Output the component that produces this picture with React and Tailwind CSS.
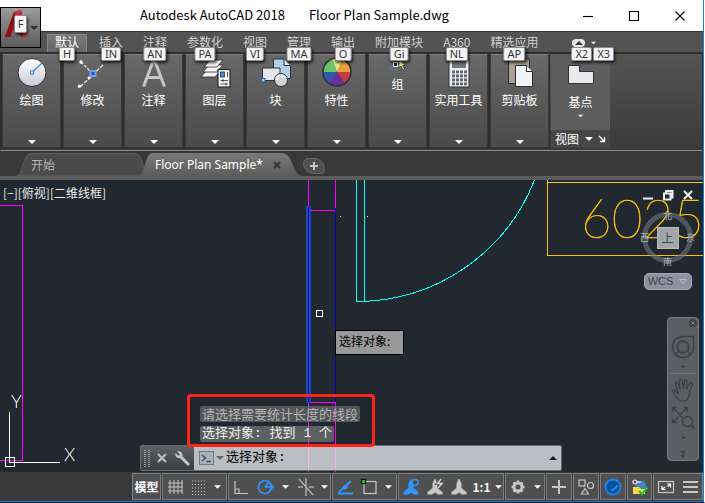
import { useState } from 'react';
import clsx from 'clsx';

const TABS = [
  { label: '默认', tip: 'H' },
  { label: '插入', tip: 'IN' },
  { label: '注释', tip: 'AN' },
  { label: '参数化', tip: 'PA' },
  { label: '视图', tip: 'VI' },
  { label: '管理', tip: 'MA' },
  { label: '输出', tip: 'O' },
  { label: '附加模块', tip: 'Gi' },
  { label: 'A360', tip: 'NL' },
  { label: '精选应用', tip: 'AP' },
];

function KeyTip({ children, className = '' }) {
  return (
    <span className={clsx('absolute z-20 flex items-center justify-center rounded-xs border border-[#8c8c8c] bg-[#f3f3f3] px-[3px] font-[Noto_Sans,sans-serif] text-[11px] leading-3 text-[#333] shadow-[1px_2px_3px_rgba(0,0,0,0.7)]', className)}>
      {children}
    </span>
  );
}

function Caret({ className = 'text-white', up = false }) {
  return (
    <svg viewBox="0 0 8 4" className={clsx('h-1 w-2 shrink-0', className)} aria-hidden="true">
      <path d={up ? 'M0 4L4 0L8 4Z' : 'M0 0H8L4 4Z'} fill="currentColor" />
    </svg>
  );
}

/* ---------- ribbon icons ---------- */

function DrawIcon() {
  return (
    <svg viewBox="0 0 32 32" className="size-8">
      <defs><linearGradient id="disc" x2="0" y2="1"><stop stopColor="#fff" /><stop offset="1" stopColor="#c6cad6" /></linearGradient></defs>
      <circle cx="16" cy="16.500" r="14" fill="url(#disc)" stroke="#303030" />
      <path d="M17 15.500L26 7" stroke="#3b86e8" strokeWidth="1.200" />
      <rect x="14.500" y="15" width="3" height="3" fill="#fff" stroke="#2f78dc" />
    </svg>
  );
}

function ModifyIcon() {
  return (
    <svg viewBox="0 0 32 32" className="size-8" fill="none">
      <path d="M4 6L16 18" stroke="#ddd" strokeWidth="1.400" strokeDasharray="3 1.500" />
      <path d="M26 9L2 32" stroke="#ddd" strokeWidth="1.400" strokeDasharray="4 1.500" />
      <circle cx="4" cy="6" r="1.700" fill="#fff" /><circle cx="2.500" cy="30.300" r="1.700" fill="#fff" /><circle cx="12" cy="22" r="1.400" fill="#fff" />
      <rect x="13.500" y="15" width="5" height="5" fill="#2d5596" stroke="#6ea4f2" strokeWidth="2" />
    </svg>
  );
}

function AnnotateIcon() {
  return (
    <svg viewBox="0 0 32 32" className="size-8">
      <path d="M5.500 30.500L16 3L26.500 30.500M9 21.500H23" fill="none" stroke="#c6c6c6" strokeWidth="3" />
    </svg>
  );
}

function LayersIcon() {
  return (
    <svg viewBox="0 0 32 32" className="size-8" stroke="#2a2a2a" strokeWidth="0.800">
      <g fill="#f4f4f4">
        <path d="M2 21L8 14H22L16 21Z" />
        <path d="M4 16L10 9H24L18 16Z" />
        <path d="M5 11L11 4H24L18 11Z" />
      </g>
      <rect x="19" y="13.500" width="12" height="17.500" fill="#f3f4f7" strokeWidth="1.200" />
      <rect x="21.500" y="16" width="4" height="5" fill="#3f8be0" stroke="#333" />
      <path d="M28.500 16V21M21.500 24.500H29M21.500 28H29M24 23V26M27 26.500V29.500" stroke="#333" />
    </svg>
  );
}

function BlockIcon() {
  return (
    <svg viewBox="0 0 32 32" className="size-8" stroke="#303030">
      <path d="M13.500 3H24L30.500 9.500V22.500H13.500Z" fill="#b4d0f0" />
      <path d="M24 3V9.500H30.500" fill="#edf4fc" />
      <path d="M2.500 12H20V24.500H2.500Z" fill="#e3e5ea" />
      <circle cx="21" cy="24" r="6.500" fill="#f0f1f4" fillOpacity="0.800" />
      <rect x="1.500" y="22.500" width="3.500" height="3.500" fill="#a8cbff" stroke="#245cb8" />
    </svg>
  );
}

function PropertiesIcon() {
  const slices = [
    ['M16 16L11 3A14 14 0 0 1 22 3.300Z', '#f0e88c'],
    ['M16 16L22 3.300A14 14 0 0 1 30 16Z', '#e9a23b'],
    ['M16 16H30A14 14 0 0 1 24 27.500Z', '#c73a3f'],
    ['M16 16L24 27.500A14 14 0 0 1 8 27.500Z', '#6a2f9c'],
    ['M16 16L8 27.500A14 14 0 0 1 2 16Z', '#3259ad'],
    ['M16 16H2A14 14 0 0 1 11 3Z', '#6cc26a'],
  ];
  return (
    <svg viewBox="0 0 32 32" className="size-8">
      {slices.map(([d, fill]) => <path key={fill} d={d} fill={fill} />)}
      <circle cx="16" cy="16" r="14" fill="none" stroke="#333" strokeWidth="1.500" />
    </svg>
  );
}

function GroupIcon() {
  return (
    <svg viewBox="0 0 16 16" className="size-4">
      <rect x="1" y="2.500" width="9" height="11" fill="none" stroke="#3c84e6" strokeDasharray="1 1" />
      <rect x="3.500" y="6.500" width="4" height="4" fill="#222" stroke="#eee" />
      <path d="M9 3V12L11 10L13 14L14.500 13L12.500 9.500H15Z" fill="#f6f0a0" stroke="#333" strokeWidth="0.700" />
    </svg>
  );
}

function CalculatorIcon() {
  return (
    <svg viewBox="0 0 32 32" className="size-8">
      <rect x="6" y="3" width="20" height="28" fill="#eceef1" stroke="#303030" />
      <rect x="9" y="5" width="14" height="7" fill="#777" />
      {[15, 19, 23, 27].map((y) => [9, 13, 17, 21].map((x) => (
        <rect key={`${x}-${y}`} x={x} y={y - 0.5} width="3" height="2.800" fill="#5f6673" />
      )))}
    </svg>
  );
}

function ClipboardIcon() {
  return (
    <svg viewBox="0 0 32 32" className="size-8" stroke="#2c2c2c">
      <path d="M4.500 3H25.500V27.500H4.500Z" fill="#aaa093" />
      <path d="M11.500 9.500H22.500L28.500 15.500V30.500H11.500Z" fill="#f1f2f5" />
      <path d="M22.500 9.500V15.500H28.500" fill="#fff" />
    </svg>
  );
}

function BaseIcon() {
  return (
    <svg viewBox="0 0 32 32" className="size-8">
      <path d="M3.500 9.500H14.500V15.500H28.500V27.500H3.500Z" fill="#e9eaee" stroke="#303030" />
    </svg>
  );
}

const PANELS = [
  { label: '绘图', Icon: DrawIcon },
  { label: '修改', Icon: ModifyIcon },
  { label: '注释', Icon: AnnotateIcon },
  { label: '图层', Icon: LayersIcon },
  { label: '块', Icon: BlockIcon },
  { label: '特性', Icon: PropertiesIcon },
  { label: '组', Icon: GroupIcon },
  { label: '实用工具', Icon: CalculatorIcon },
  { label: '剪贴板', Icon: ClipboardIcon },
];

function TitleBar() {
  return (
    <header className="flex h-[31px] items-center bg-white pl-[140px] text-black">
      <h1 className="flex flex-1 gap-6 whitespace-nowrap pb-0.5 text-[13px] leading-4">
        <span>Autodesk AutoCAD 2018</span>
        <span>Floor Plan Sample.dwg</span>
      </h1>
      {[
        ['最小化', 'M0 5.500H10'],
        ['最大化', 'M0.500 0.500H9.500V9.500H0.500Z'],
        ['关闭', 'M0.500 0.500L9.500 9.500M9.500 0.500L0.500 9.500'],
      ].map(([name, d]) => (
        <button key={name} aria-label={name} className="flex h-7 w-[46px] items-center justify-center">
          <svg viewBox="0 0 10 10" className="size-[10px] overflow-visible"><path d={d} fill="none" stroke="#000" strokeWidth="1.100" /></svg>
        </button>
      ))}
    </header>
  );
}

function AppMenu() {
  return (
    <button aria-label="应用程序菜单" className="absolute top-[7px] left-0 z-30 flex h-[41px] w-[41px] items-center border border-black bg-linear-to-b from-[#9c9c9c] to-[#5c5c5c]">
      <svg viewBox="0 0 28 28" className="absolute top-0.5 left-1 size-7">
        <path d="M0 27L9 2L16 0L22 26L16 27L14 20L8 20L6 27Z" fill="#a51b20" />
        <path d="M9 2L16 0L22 26L18 27L11 6L5 27H0Z" fill="#cf2e33" />
        <path d="M0 27L9 2L11 6L5 27Z" fill="#8b1015" />
      </svg>
      <KeyTip className="top-[7px] left-[13px] h-[18px] w-[13px] rounded-sm">F</KeyTip>
      <Caret className="ml-auto mr-0.5 text-[#26303f]" />
    </button>
  );
}

function RibbonTabs() {
  const [active, setActive] = useState('默认');
  return (
    <nav className="flex h-[21px] items-end border-t border-[#303030] bg-[#535353] pl-[47px]">
      {TABS.map(({ label, tip }) => (
        <button
          key={label}
          onClick={() => setActive(label)}
          className={clsx(
            'relative mr-1 flex h-[18px] shrink-0 items-center justify-center whitespace-nowrap border border-b-0 px-[7px] text-[12px] leading-4',
            active === label ? 'border-[#868686] bg-linear-to-b from-[#777] to-[#666] text-white' : 'border-transparent text-[#cfcfcf]',
          )}
        >
          <span className="-mt-1">{label}</span>
          <KeyTip className="top-[12px] left-1/2 h-[14px] -translate-x-1/2">{tip}</KeyTip>
        </button>
      ))}
      <button aria-label="最小化功能区" className="relative ml-[22px] flex h-[18px] w-[15px] items-center">
        <span className="flex h-2 w-[13px] items-center justify-center rounded-sm bg-[#e2e4ea]">
          <Caret up className="w-1.5 text-[#333]" />
        </span>
        <KeyTip className="top-[13px] -left-px h-[14px]">X2</KeyTip>
      </button>
      <button aria-label="功能区选项" className="relative ml-1 flex h-[18px] w-3 items-center">
        <Caret className="w-[5px] text-white" />
        <KeyTip className="top-[13px] left-0.5 h-[14px]">X3</KeyTip>
      </button>
    </nav>
  );
}

function Ribbon() {
  return (
    <section className="flex h-[99px] gap-0.5 border border-t-2 border-[#2f2f2f] border-b-[#8b8b8b] bg-linear-to-b from-[#545454] to-[#3a3a3a] pb-0.5 pl-px text-[12px] text-white">
      {PANELS.map(({ label, Icon }) => (
        <button key={label} className="flex w-[59px] shrink-0 flex-col items-center border border-[#3a3a3a] border-t-[#7d7d7d] bg-linear-to-b from-[#696969] to-[#4a4a4a] pt-px pb-[3px] outline outline-[#2f2f2f]">
          <Icon />
          <span className="mt-1 whitespace-nowrap leading-4">{label}</span>
          <Caret className="mt-auto" />
        </button>
      ))}
      <div className="flex w-[59px] shrink-0 flex-col bg-[#5e5e5e]">
        <button className="flex flex-1 flex-col items-center pt-0.5">
          <BaseIcon />
          <span className="mt-1.5 leading-4">基点</span>
          <Caret className="mt-1 w-[5px]" />
        </button>
        <button className="flex h-[18px] items-center gap-1.5 bg-[#464646] pl-1">
          视图
          <Caret />
          <svg viewBox="0 0 6 6" className="size-1.5 overflow-visible"><path d="M0 0L5 5M5.500 1V5.500H1" fill="none" stroke="#fff" strokeWidth="1.300" /></svg>
        </button>
      </div>
    </section>
  );
}

function FileTabs() {
  return (
    <nav className="flex h-[29px] items-end border-b-4 border-[#5c5c5c] bg-[#383838] pl-[17px] text-[12px]">
      <button className="relative flex h-[23px] w-[132px] items-center pl-[14px] text-[#b5b5b5]">
        <svg viewBox="0 0 132 23" preserveAspectRatio="none" className="absolute inset-0 size-full" aria-hidden="true">
          <path d="M0 23C7 21 5 1 14 0.500H118C127 1 125 21 132 23Z" fill="#4b4b4b" stroke="#5e5e5e" />
        </svg>
        <span className="relative">开始</span>
      </button>
      <button className="relative -ml-[10px] flex h-[23px] w-[164px] items-center gap-2.5 pl-4 font-[Noto_Sans,sans-serif] text-white">
        <svg viewBox="0 0 164 23" preserveAspectRatio="none" className="absolute inset-0 size-full" aria-hidden="true">
          <defs><linearGradient id="tab" x2="0" y2="1"><stop stopColor="#7a7a7a" /><stop offset="1" stopColor="#5c5c5c" /></linearGradient></defs>
          <path d="M0 23C7 21 5 0 14 0H142C156 0 151 21 164 23Z" fill="url(#tab)" />
        </svg>
        <span className="relative whitespace-nowrap">Floor Plan Sample*</span>
        <svg viewBox="0 0 8 8" className="relative size-2"><path d="M1 1L7 7M7 1L1 7" stroke="#343434" strokeWidth="2" /></svg>
      </button>
      <button aria-label="新图形" className="mb-0.5 flex h-4 w-[22px] items-center justify-center rounded-tl-md rounded-tr-xl rounded-br-sm rounded-bl-xl border border-[#666] bg-[#505050]">
        <svg viewBox="0 0 8 8" className="size-2"><path d="M4 0V8M0 4H8" stroke="#c4c4c4" strokeWidth="2" /></svg>
      </button>
    </nav>
  );
}

/* Model space geometry, one unit per pixel. */
function Drawing() {
  return (
    <svg width="703" height="292" className="absolute top-0 left-0" fill="none" shapeRendering="crispEdges">
      <g stroke="#ff00ff">
        <path d="M0 25.500H22.500V280.500H0" />
        <path d="M308.500 0V30.500H335.500V0M308.500 292V222.500H335.500V292" />
      </g>
      <path d="M308.500 28V221" stroke="#1d4ba8" strokeWidth="5" strokeLinecap="round" />
      <path d="M308.500 27V222" stroke="#0000ff" strokeWidth="1" />
      <path d="M335.500 28V222" stroke="#0000b8" />
      <g stroke="#00ffff">
        <path d="M356.500 0V121.500H364.500V0" />
        <path d="M356.500 121.500A191 191 0 0 0 534.500 0" />
      </g>
      <g stroke="#ffbf00">
        <path d="M547.500 0V75.500H703M547.500 2.500H703" />
      </g>
      <text x="581" y="58" fill="#ffbf00" stroke="#ffbf00" strokeWidth="0.600" className="font-[Lato,sans-serif] text-[53px] font-thin">6025</text>
      <path d="M340 36.500H341M367 36.500H368" stroke="#fff" />
      <rect x="316.500" y="130.500" width="6" height="6" stroke="#fff" />
      <path d="M5.500 277.500H14.500V286.500H5.500ZM9.500 232V282.500H60" stroke="#fff" />
      <text x="11" y="228" fill="#fff" className="font-[Lato,sans-serif] text-[18px] font-light">Y</text>
      <text x="64" y="281" fill="#fff" className="font-[Lato,sans-serif] text-[18px] font-light">X</text>
    </svg>
  );
}

function ViewCube() {
  return (
    <div className="absolute top-2.5 right-2 flex w-[55px] flex-col items-center">
      <div className="flex gap-2.5">
        {[
          ['最小化视口', 'M0 8.500H10'],
          ['还原视口', 'M3 3V1H9.500V7.500H7.500M1 3.500H7.500V9.500H1Z'],
          ['关闭视口', 'M1 1L9 9M9 1L1 9'],
        ].map(([name, d]) => (
          <button key={name} aria-label={name} className="size-[10px]">
            <svg viewBox="0 0 10 10" className="block size-[10px] overflow-visible"><path d={d} fill="none" stroke="#eee" strokeWidth="2" /></svg>
          </button>
        ))}
      </div>
      <div className="mt-3 flex size-[51px] items-center justify-center rounded-full border-[5px] border-[#70757d]/60 text-[9px] leading-3 text-[#aeb0b3]">
        <span className="absolute top-[20px]">北</span>
        <span className="absolute bottom-[22px]">南</span>
        <span className="absolute top-[42px] left-0">西</span>
        <span className="absolute top-[42px] right-0">东</span>
        <button className="size-[22px] border border-[#b9bbbd] bg-[#a2a6a9] text-[12px] leading-4 text-[#3e4850]">上</button>
      </div>
      <button className="mt-2.5 flex h-[17px] w-[48px] items-center justify-center gap-1.5 rounded-[5px] border border-[#a6a9b3] bg-[#8f929e] font-[Liberation_Sans,sans-serif] text-[11px] text-[#3f4350]">
        WCS
        <svg viewBox="0 0 8 5" className="h-[5px] w-2"><path d="M0.500 0.500H7.500L4 4.500Z" fill="none" stroke="#b8bac2" /></svg>
      </button>
    </div>
  );
}

function NavBar() {
  return (
    <aside className="absolute right-1 bottom-[11px] flex h-[144px] w-8 flex-col items-center rounded-[4px] border border-[#777b80] bg-[#5b5f64] text-[#3d4146]">
      <button aria-label="关闭导航栏" className="mt-px self-end">
        <svg viewBox="0 0 8 8" className="mr-px size-2"><circle cx="4" cy="4" r="3.800" fill="currentColor" /><path d="M2.500 2.500L5.500 5.500M5.500 2.500L2.500 5.500" stroke="#888" /></svg>
      </button>
      <button aria-label="控制盘" className="mt-2">
        <svg viewBox="0 0 24 24" className="block size-6" fill="none" stroke="currentColor" strokeWidth="1.300">
          <path d="M12 1.500H22.500V12A10.500 10.500 0 1 1 12 1.500Z" /><circle cx="12" cy="12" r="6" /><circle cx="12" cy="12" r="4.500" strokeWidth="0.600" /><path d="M7.500 16.500L4.500 19.500M16.500 16.500L19.500 19.500" />
        </svg>
      </button>
      <Caret className="mt-1.5 w-[5px]" />
      <hr className="mt-1 w-[26px] border-[#70757a]" />
      <button aria-label="平移" className="mt-1">
        <svg viewBox="0 0 24 24" className="block size-6" fill="none" stroke="currentColor" strokeWidth="1.300" strokeLinejoin="round">
          <path d="M8 22C5 19 3 16 1.500 13.500C1 12 3 11.500 4 12.500L7 15.500L4.500 5.500C4.300 3.500 6.500 3.500 7 5L9 11L8.500 2.800C8.500 1 11 1 11.300 2.800L12.300 10.500L13.500 2.500C14 1 16 1.500 16 3L15.500 11L19 5.500C20 4 22 5 21.200 6.800L18.500 13C19 17 17.500 20 16 22C13.500 23.500 10.500 23.500 8 22Z" />
        </svg>
      </button>
      <button aria-label="缩放" className="mt-1">
        <svg viewBox="0 0 24 24" className="block size-6" fill="none" stroke="currentColor" strokeWidth="1.300">
          <path d="M1.500 5.500V1.500H5.500M1.500 1.500L13 13M12.500 1.500H16.500V5.500M16.500 1.500L1.500 16.500M1.500 12.500V16.500H5.500" /><circle cx="16.500" cy="15.500" r="5" /><path d="M20 19L23 22.500" strokeWidth="2.600" />
        </svg>
      </button>
      <Caret className="mt-1.5 w-[5px]" />
      <svg viewBox="0 0 6 8" className="mt-2.5 h-2 w-1.5"><path d="M0 0H6M1 1.500H5L3 4ZM1 5H5L3 8Z" fill="currentColor" stroke="currentColor" strokeWidth="0.600" /></svg>
    </aside>
  );
}

function CommandLine() {
  const [value, setValue] = useState('');
  return (
    <div className="absolute right-[141px] bottom-px left-[140px]">
      <div className="relative z-10 ml-[47px] -mb-0.5 flex h-[53px] w-[188px] flex-col items-start gap-1 rounded-[4px] border-[3px] border-[#fd2517] pt-[9px] pl-2.5 text-[13px] leading-4 whitespace-nowrap">
        <p className="rounded-xs bg-[#777]/60 px-0.5 text-[#b4b4b4]">请选择需要统计长度的线段</p>
        <p className="rounded-xs bg-[#777]/70 px-0.5 font-[Liberation_Mono,Noto_Sans_CJK_SC,monospace] text-[#eee]">选择对象: 找到 1 个</p>
      </div>
      <div className="flex h-[26px] rounded-xs border border-[#6c6d70] bg-[#eeeff1]/75">
        <div className="flex w-[53px] items-center justify-between bg-linear-to-b from-[#5e6163] to-[#3b3e41] pr-1 pl-[3px]">
          <svg viewBox="0 0 6 17" className="h-[17px] w-1.5"><path d="M1 0V17M5 0V17" stroke="#999" strokeWidth="2" strokeDasharray="1 1" /></svg>
          <button aria-label="关闭命令行">
            <svg viewBox="0 0 10 10" className="size-[10px]"><path d="M1 1L9 9M9 1L1 9" stroke="#bcbcbc" strokeWidth="2.200" /></svg>
          </button>
          <button aria-label="自定义">
            <svg viewBox="0 0 16 16" className="size-4">
              <path d="M7 7L14 14" stroke="#c6c6c6" strokeWidth="3" strokeLinecap="round" />
              <path d="M3 1.500L5.500 4V5.500H4L1.500 3C0.500 6 3 9 6.500 8L8.500 6C9 3 6.500 0.500 3 1.500Z" fill="#c6c6c6" />
            </svg>
          </button>
        </div>
        <label htmlFor="command" className="flex items-center gap-0.5 pl-[5px] font-[Liberation_Mono,Noto_Sans_CJK_SC,monospace] text-[13px] whitespace-nowrap text-black">
          <svg viewBox="0 0 15 14" className="h-3.5 w-[15px]">
            <rect x="0.500" y="0.500" width="14" height="13" fill="#a9b1bb" stroke="#6f7985" />
            <path d="M3 4L6.500 7L3 10M7.500 10.500H12" fill="none" stroke="#3d4856" strokeWidth="1.300" />
          </svg>
          <Caret className="w-1.5 text-[#666]" />
          选择对象:
        </label>
        <input id="command" value={value} onChange={(e) => setValue(e.target.value)} className="min-w-0 flex-1 bg-transparent px-1 text-[13px] text-black outline-none" />
        <button aria-label="命令历史" className="px-1"><Caret up className="text-[#1c1c1c]" /></button>
      </div>
    </div>
  );
}

/* ---------- status bar ---------- */

const SCALE = 'M8.500 1H9.500L11.500 5.500V10L16.500 14V16.500H12L9 14.500L6 16.500H1.500V14L6.500 10V5.500Z';

function Tool({ name, className = 'w-6', children }) {
  return (
    <button aria-label={name} className={clsx('flex h-full items-center justify-center', className)}>
      <svg viewBox="0 0 18 18" className="size-[18px] overflow-visible" fill="none" stroke="#c6c6c6" strokeWidth="1.200">{children}</svg>
    </button>
  );
}

function More({ className = 'w-[17px]' }) {
  return <button aria-label="更多" className={clsx('flex h-full items-center justify-center', className)}><Caret className="w-[7px] text-white" /></button>;
}

function Cell({ className, children }) {
  return <div className={clsx('flex h-[27px] shrink-0 items-center border border-[#7f7f7f] bg-[#505050]', className)}>{children}</div>;
}

function StatusBar() {
  return (
    <footer className="flex h-[29px] items-center justify-end gap-px bg-[#393939] text-[12px] text-white">
      <Cell className="w-[29px] justify-center font-bold"><button className="whitespace-nowrap">模型</button></Cell>
      <Cell className="w-[65px]">
        <Tool name="栅格"><path d="M4 2V16M8 2V16M12 2V16M16 2V16M2 5H17M2 9H17M2 13H17" strokeWidth="1" /></Tool>
        <Tool name="捕捉"><path d="M3 3H17M3 6.500H17M3 10H17M3 13.500H17M3 16.500H17" strokeDasharray="1 2" /></Tool>
        <More />
      </Cell>
      <Cell className="w-[103px]">
        <Tool name="正交"><path d="M3 3V15.500H16M3 11H7V15.500" /></Tool>
        <Tool name="极轴"><g stroke="#2f96ff" strokeWidth="1.600"><circle cx="9" cy="9" r="6.500" /><path d="M9 9H17M9 9L13 4M14 6L17 9L14 12" /></g></Tool>
        <More className="w-[17px]" />
        <Tool name="等轴测"><path d="M2 1L16 17M1 9H6M12 9H17M9 0V18" stroke="#aaa" strokeWidth="1.500" /></Tool>
        <More className="w-3" />
      </Cell>
      <Cell className="w-[65px]">
        <Tool name="追踪"><g stroke="#2f96ff" strokeWidth="1.800"><path d="M2 15.500H17M3 14L15 3" /><circle cx="9.500" cy="9" r="1.500" fill="#2f96ff" /></g></Tool>
        <Tool name="对象捕捉"><rect x="4" y="3.500" width="12" height="12" /><rect x="1.500" y="1.500" width="4" height="4" fill="#1ae01a" stroke="#111" /></Tool>
        <More className="w-3.5" />
      </Cell>
      <Cell className="w-[106px]">
        <Tool name="注释可见性"><path d={SCALE} fill="#2f96ff" stroke="none" /><circle cx="13" cy="4.500" r="3" fill="#505050" stroke="#2f96ff" strokeWidth="1.500" /></Tool>
        <Tool name="自动缩放"><path d={SCALE} fill="#c6c6c6" stroke="none" /><path d="M15 1L11.500 5.500H16L12 10" stroke="#505050" strokeWidth="3" /><path d="M15 1L11.500 5.500H16L12 10" stroke="#d0d0d0" strokeWidth="1.500" /></Tool>
        <Tool name="注释比例"><path d={SCALE} fill="#c6c6c6" stroke="none" /></Tool>
        <button className="flex h-full flex-1 items-center justify-center gap-1 font-bold">1:1<Caret className="w-[7px] text-white" /></button>
      </Cell>
      <Cell className="w-10">
        <Tool name="切换工作空间"><circle cx="9" cy="9" r="4" strokeWidth="3" /><path d="M9 2.500V5M9 13V15.500M2.500 9H5M13 9H15.500M4.400 4.400L6 6M12 12L13.600 13.600M13.600 4.400L12 6M6 12L4.400 13.600" strokeWidth="2.600" /></Tool>
        <More className="w-3.5" />
      </Cell>
      <Cell className="w-[26px] justify-center"><Tool name="注释监视器"><path d="M9 2V16M2 9H16" strokeWidth="2" /></Tool></Cell>
      <Cell className="w-[26px] justify-center"><Tool name="隔离对象"><rect x="2" y="2" width="6" height="6" /><circle cx="13.500" cy="7.500" r="3" /><path d="M8 10.500L11.500 16H4.500Z" /></Tool></Cell>
      <Cell className="w-[26px] justify-center"><Tool name="硬件加速"><circle cx="9" cy="9" r="7.500" fill="#06509c" stroke="#1a86f0" strokeWidth="1.800" /><path d="M7 11.500L8.500 12.500L14 7.500" stroke="#35a0ff" strokeWidth="1.200" /></Tool></Cell>
      <Cell className="w-[25px] justify-center">
        <Tool name="图形检查">
          <path d="M5 3H13L15 6V12H5Z" fill="#3d86c2" stroke="none" /><path d="M2 9H8L10 11H14V16H2Z" fill="#f5d949" stroke="none" />
          <circle cx="4" cy="4" r="2" stroke="#eee" /><path d="M6 4H10" stroke="#eee" /><path d="M8 13L11 16L16.500 9.500" stroke="#27c32a" strokeWidth="2.200" />
        </Tool>
      </Cell>
      <Cell className="w-[50px]">
        <Tool name="全屏显示"><rect x="1.500" y="3.500" width="15" height="11" /><path d="M5 8V11.500H8.500M5 11.500L8 9M10 6H13.500V9.500M13.500 6L10.500 8.500" stroke="#fff" /></Tool>
        <Tool name="自定义状态栏"><path d="M2 4H17M2 9H17M2 14H17" strokeWidth="2" /></Tool>
      </Cell>
    </footer>
  );
}

export default function App() {
  return (
    <div className="flex min-h-screen border-r border-b border-r-white border-b-[#202020] font-[Noto_Sans_CJK_SC,sans-serif]">
      <div className="relative flex min-w-0 flex-1 flex-col border-r border-b border-[#1580d8] bg-[#393939]">
        <TitleBar />
        <AppMenu />
        <RibbonTabs />
        <Ribbon />
        <FileTabs />
        <main className="relative min-h-[292px] flex-1 overflow-hidden bg-[#212830]">
          <Drawing />
          <p className="relative pt-1 pl-[3px] text-[12px] leading-[18px] text-[#e8e8e8]">[−][俯视][二维线框]</p>
          <output className="absolute top-[150px] left-[335px] flex h-[25px] w-[69px] border border-black bg-[#999] pt-px pl-[3px] text-[12px] leading-[18px] text-black">选择对象:</output>
          <ViewCube />
          <NavBar />
          <CommandLine />
        </main>
        <StatusBar />
      </div>
    </div>
  );
}
